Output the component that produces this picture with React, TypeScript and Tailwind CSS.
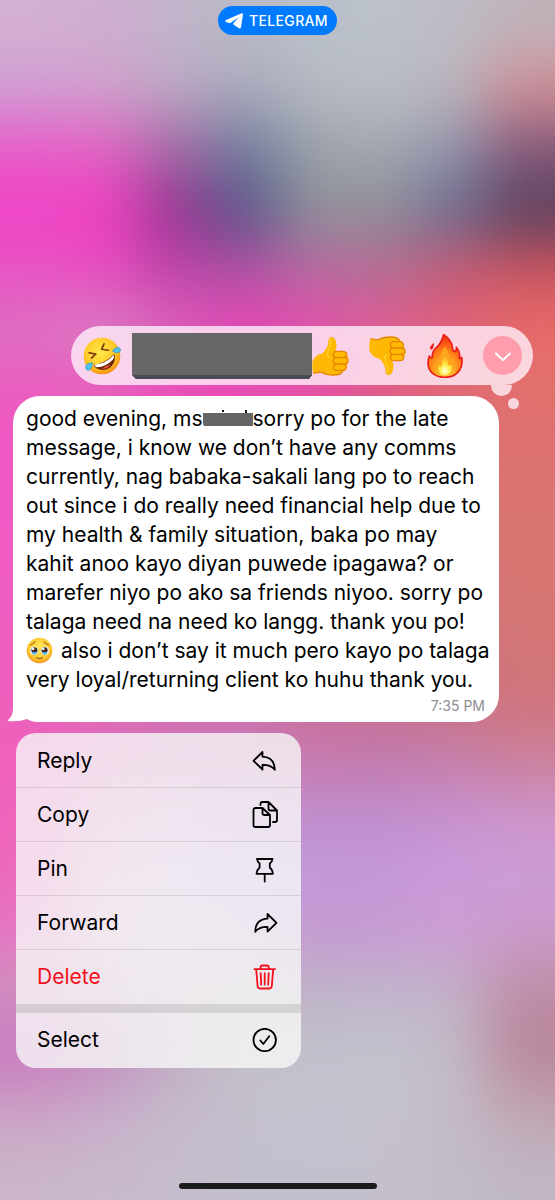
import React from 'react';

// Wallpaper colours, top to bottom, eight swatches per row
const WALLPAPER = [
  ['#d3b0d2', '#cfadd0', '#c2b4ca', '#b8b9c6', '#b9c0c8', '#bcc1ca', '#bdbcc5', '#c0b2ba'],
  ['#d09cd4', '#d09fcc', '#bca8c4', '#a9a9bb', '#b4b9c2', '#b9bdc6', '#b9b4bd', '#d08c94'],
  ['#e85cc8', '#e262c2', '#a268a4', '#6f7a9c', '#9ba1a9', '#a4a8af', '#9294ac', '#84587a'],
  ['#f042c6', '#f03ec2', '#983490', '#545488', '#8c9098', '#8f8f98', '#6c6e92', '#58405c'],
  ['#e854c4', '#e84cc0', '#c044a8', '#b050a4', '#b868a0', '#b46c94', '#c45c78', '#cc5460'],
  ['#dc70c0', '#d880c2', '#dc60bc', '#e846b8', '#e450ac', '#e25c96', '#e45f7c', '#e86c6a'],
  ['#ec5cc0', '#e85cbc', '#ec4cb8', '#e84cb4', '#e450a8', '#e05c88', '#e06c74', '#e2706c'],
  ['#f058c4', '#ec58c0', '#e854b8', '#e454b0', '#e058a0', '#dc6484', '#dc7074', '#dc7272'],
  ['#f05ac4', '#ec5cc0', '#e45cb8', '#e05cac', '#dc609c', '#d86c84', '#d87474', '#da7670'],
  ['#f05cc4', '#ea60c0', '#e064b8', '#d868a8', '#d46c98', '#d07088', '#d47478', '#d87672'],
  ['#ee60c0', '#e864bc', '#dc68b4', '#d46ca8', '#cc7098', '#cc7088', '#d0747c', '#d47676'],
  ['#ec60bc', '#e468b8', '#d86cb4', '#d06cac', '#cc6c98', '#c86c8c', '#cc7080', '#d07479'],
  ['#ee60bc', '#dc6cb8', '#cc74b4', '#c878b4', '#c878a8', '#c278a8', '#c47ca4', '#cc7c94'],
  ['#ee64bc', '#dc90c4', '#cc98cc', '#c090cc', '#c08ccc', '#c08ccc', '#c68fcd', '#cc94c8'],
  ['#ec68bc', '#dca0d0', '#cca8dc', '#c4a0dc', '#c298d8', '#c398d8', '#cc9bdc', '#ce9cd8'],
  ['#e674c2', '#dcaacc', '#ccb0d8', '#c8a8d4', '#c498d2', '#c69ad2', '#cc9cd4', '#cc9acc'],
  ['#cf92bf', '#d0a4c4', '#c8b4c8', '#c2b8c4', '#bfb2c6', '#c0b4cb', '#c2b2c8', '#be8ea6'],
  ['#c878c0', '#c088bc', '#c0acc4', '#c2bfc8', '#c2c1cc', '#c3c2cd', '#c2bcc8', '#b8849a'],
  ['#cca0c4', '#c8accb', '#c5b9ca', '#c5bfcc', '#c6c2cf', '#c6c2ce', '#c4bcc8', '#c0a4b0'],
  ['#cab6ca', '#c8b9cb', '#c5bccc', '#c4bfce', '#c3bfce', '#c4bfcb', '#c2bbc8', '#c0b6c4'],
];

const Wallpaper: React.FC = () => (
  <svg
    className="absolute inset-0 h-full w-full"
    viewBox="0 0 560 1200"
    preserveAspectRatio="none"
    aria-hidden="true"
  >
    <defs>
      <filter id="soften" filterUnits="userSpaceOnUse" x="-160" y="-160" width="880" height="1520" colorInterpolationFilters="sRGB">
        <feGaussianBlur stdDeviation="30" />
      </filter>
    </defs>
    <g filter="url(#soften)" shapeRendering="crispEdges">
      {WALLPAPER.map((row, r) =>
        row.map((color, c) => {
          const left = c === 0 ? -150 : c * 70;
          const right = c === 7 ? 710 : (c + 1) * 70;
          const top = r === 0 ? -150 : r * 60;
          const bottom = r === 19 ? 1350 : (r + 1) * 60;
          return <rect key={`${r}-${c}`} x={left} y={top} width={right - left} height={bottom - top} fill={color} />;
        })
      )}
    </g>
  </svg>
);

const Rofl: React.FC = () => (
  <svg className="h-[38px] w-[38px]" viewBox="0 0 112 112" aria-hidden="true">
    <defs>
      <radialGradient id="rofl" cx="0.45" cy="0.4" r="0.6">
        <stop offset="0" stopColor="#ffe84a" />
        <stop offset="0.7" stopColor="#ffc928" />
        <stop offset="1" stopColor="#f78f12" />
      </radialGradient>
    </defs>
    <circle cx="56" cy="56" r="54" fill="url(#rofl)" />
    <g fill="none" stroke="#7c3d0c" strokeWidth="5" strokeLinecap="round" strokeLinejoin="round">
      <path d="M18 47 38 50 25 62" />
      <path d="M62 20 55 36 75 39" />
    </g>
    <path d="M31 82Q66 78 92 50Q99 70 84 86Q64 105 39 92Q32 88 31 82Z" fill="#6d260d" />
    <path d="M33 82Q67 79 91 53Q93 62 87 68Q65 90 40 89Q35 88 33 82Z" fill="#fff" />
    <path d="M56 94Q66 84 82 82Q72 95 56 94Z" fill="#f0503c" />
    <path d="M28 76Q8 76 8 90Q8 99 16 98Q26 96 28 76Z" fill="#52c5ee" stroke="#268fc6" strokeWidth="2" />
    <path d="M87 42Q94 28 107 32Q113 36 109 43Q101 50 87 42Z" fill="#52c5ee" stroke="#268fc6" strokeWidth="2" />
  </svg>
);

const Thumb: React.FC<{ className?: string }> = ({ className }) => (
  <svg className={className} viewBox="0 0 114 120" aria-hidden="true">
    <path
      d="M2 74Q12 54 30 53Q46 38 49 22Q48 5 57 3Q68 2 72 18Q76 30 70 46H92Q104 46 104 56Q111 61 108 73Q110 82 104 90Q104 101 95 105Q90 117 64 117Q42 117 30 109Q16 108 4 112Q-1 96 2 74Z"
      fill="#ffb804"
    />
    <path
      d="M70 46H92Q104 46 104 56Q104 64 94 65H72Q64 65 64 57Q64 50 70 46M94 65Q109 65 108 75Q107 84 97 84H71Q61 82 64 72Q66 66 72 65M97 84Q107 90 101 99Q98 103 92 103H72Q62 101 65 91Q67 85 71 84M92 103Q90 117 64 117Q42 117 30 109Q16 108 4 112"
      fill="none"
      stroke="#e58600"
      strokeWidth="4"
      strokeLinejoin="round"
    />
    <path d="M55 10Q59 26 49 45Q43 58 52 64" fill="none" stroke="#ffd22e" strokeWidth="4" strokeLinecap="round" />
  </svg>
);

const Fire: React.FC = () => (
  <svg className="h-11 w-[38px]" viewBox="0 0 108 132" aria-hidden="true">
    <defs>
      <radialGradient id="fire" cx="0.5" cy="0.85" r="0.85">
        <stop offset="0" stopColor="#fff06a" />
        <stop offset="0.4" stopColor="#ff9a1c" />
        <stop offset="0.75" stopColor="#ff5a14" />
        <stop offset="1" stopColor="#ee2c18" />
      </radialGradient>
      <radialGradient id="core" cx="0.5" cy="0.75" r="0.6">
        <stop offset="0" stopColor="#fffce0" />
        <stop offset="0.5" stopColor="#fff04e" />
        <stop offset="1" stopColor="#ffc42a" />
      </radialGradient>
    </defs>
    <path
      d="M50 2Q74 18 76 41Q77 52 84 53Q89 50 88 40Q102 58 96 72Q101 74 104 70Q108 92 98 108Q84 130 53 130Q21 130 7 106Q-1 88 7 66Q10 72 16 72Q14 54 28 41Q43 28 50 2Z"
      fill="url(#fire)"
      stroke="#e91b14"
      strokeWidth="5"
      strokeLinejoin="round"
    />
    <path d="M20 26Q22 34 17 44Q12 50 9 43Q8 37 20 26Z" fill="#e91b14" />
    <path d="M53 38Q69 54 65 74Q68 80 74 75Q89 96 76 115Q66 126 52 126Q35 126 27 112Q20 95 32 81Q36 86 41 83Q38 56 53 38Z" fill="#ffa51d" />
    <path d="M54 68Q65 80 62 93Q70 96 73 91Q80 108 69 118Q60 126 49 124Q32 120 32 105Q32 98 36 94Q39 98 44 96Q43 79 54 68Z" fill="url(#core)" />
  </svg>
);

const TearyFace: React.FC = () => (
  <svg className="mr-2 inline-block h-[27px] w-[27px] align-[-6px]" viewBox="0 0 80 80" role="img" aria-label="Face holding back tears">
    <defs>
      <radialGradient id="teary" cx="0.5" cy="0.4" r="0.6">
        <stop offset="0" stopColor="#ffe95a" />
        <stop offset="0.7" stopColor="#ffcb34" />
        <stop offset="1" stopColor="#f3921b" />
      </radialGradient>
    </defs>
    <circle cx="40" cy="40" r="38" fill="url(#teary)" />
    <path d="M13 24Q22 20 27 14M67 24Q58 20 53 14" fill="none" stroke="#9a5a12" strokeWidth="3" strokeLinecap="round" />
    <circle cx="24" cy="41" r="12" fill="#e9f6ff" />
    <circle cx="56" cy="41" r="12" fill="#e9f6ff" />
    <circle cx="25" cy="39" r="9" fill="#3c2a24" />
    <circle cx="55" cy="39" r="9" fill="#3c2a24" />
    <path d="M17 47Q25 42 33 47Q31 53 24 53Q18 52 17 47ZM47 47Q55 42 63 47Q62 53 56 53Q49 52 47 47Z" fill="#5db9ea" />
    <circle cx="21" cy="35" r="4" fill="#fff" />
    <circle cx="51" cy="35" r="4" fill="#fff" />
    <path d="M31 61Q40 66 49 61" fill="none" stroke="#8a4711" strokeWidth="3" strokeLinecap="round" />
  </svg>
);

const ICONS = {
  reply: 'M11.5 5 2.5 13.8 11.5 22.5V17.8C17 17.6 20.5 18.6 23.8 22.7 23.6 14.5 19 10 11.5 9.6Z',
  copy: 'M4.5 7H11.5L19 14V24Q19 26 17 26H4.5Q2.5 26 2.5 24V9Q2.5 7 4.5 7ZM11.5 7V12Q11.5 14 13.5 14H19M9.5 4V3Q9.5 1 11.5 1H17.5L26 9.5V19Q26 21 24 21H22M17.5 1V7.5Q17.5 9.5 19.5 9.5H26',
  pin: 'M6 4H21.5C21.2 6.5 20.2 7.5 18.8 8.5V12.5C20.5 14 21.8 16 21.8 18.8H5.5C5.5 16 7 14 8.6 12.5V8.5C7.3 7.5 6.3 6.5 6 4ZM13.7 18.8V26.5',
  forward: 'M16.5 5 25.5 13.8 16.5 22.5V17.8C11 17.6 7.5 18.6 4.2 22.7 4.4 14.5 9 10 16.5 9.6Z',
  trash: 'M3.5 6.2H24M9.5 6V4.5Q9.5 2.5 11.5 2.5H15.5Q17.8 2.5 17.8 4.5V6M5.2 6.5 6.6 23Q6.8 25.5 9 25.5H18.4Q20.6 25.5 20.8 23L22.2 6.5M9.7 10.2 10.2 21.6M13.7 10.2V21.6M17.7 10.2 17.2 21.6',
  select: 'M2.5 14a11.2 11.2 0 1 0 22.4 0a11.2 11.2 0 1 0-22.4 0M9.4 14.5 12.3 18 18.2 10.2',
};

const MenuItem: React.FC<{ label: string; icon: keyof typeof ICONS; className?: string }> = ({ label, icon, className = '' }) => (
  <li>
    <button type="button" className={`flex h-[54px] w-full items-center justify-between pl-[21px] pr-[22px] ${className}`}>
      {label}
      <svg
        className="h-7 w-7"
        viewBox="0 0 28 28"
        fill="none"
        stroke="currentColor"
        strokeWidth="1.8"
        strokeLinecap="round"
        strokeLinejoin="round"
        aria-hidden="true"
      >
        <path d={ICONS[icon]} />
      </svg>
    </button>
  </li>
);

const Redacted: React.FC = () => (
  <svg className="inline-block h-[18px] w-[50px] align-baseline" viewBox="0 0 50 18" role="img" aria-label="Name hidden">
    <path d="M19 2h2v2h-2zM42 2h2v3h-2z" fill="#111" />
    <path d="M0 5H50V18H1L0 16Z" fill="#656565" />
  </svg>
);

const App: React.FC = () => {
  return (
    <main className="relative isolate flex min-h-screen flex-col overflow-hidden bg-[#c5bccc] pt-[6px] font-['Inter',sans-serif] text-black">
      <div className="absolute inset-0 -z-10">
        <Wallpaper />
      </div>

      <a
        href="#telegram"
        className="flex h-[29px] items-center gap-[6px] self-center rounded-full bg-[#007aff] pl-[7px] pr-[9px] text-[14px] font-medium tracking-wide text-white"
      >
        <svg className="h-4 w-[18px]" viewBox="0 0 54 48" fill="currentColor" aria-hidden="true">
          <path d="M50 1 3 21Q-1 24 3 27L15 31 41 13 25 31Q24 33 26 35L42 46Q47 48 48 43L54 4Q54 0 50 1Z" />
        </svg>
        TELEGRAM
      </a>

      <div className="relative mr-[22px] mt-[291px] flex h-[59px] items-center self-end rounded-full bg-[#fff0fa]/80 pl-3 pr-[11px]">
        <button type="button" aria-label="Laugh">
          <Rofl />
        </button>
        <svg className="ml-[11px] h-[47px] w-[180px]" viewBox="0 0 180 47" aria-hidden="true">
          <path d="M0 1H180V43L177 47H4L0 43Z" fill="#676767" />
          <path d="M0 43H180L177 47H4Z" fill="#484a55" />
        </svg>
        <div className="flex items-center gap-[19px]">
          <button type="button" aria-label="Thumbs up">
            <Thumb className="h-10 w-[38px]" />
          </button>
          <button type="button" aria-label="Thumbs down">
            <Thumb className="h-10 w-[38px] -scale-y-100" />
          </button>
          <button type="button" aria-label="Fire">
            <Fire />
          </button>
          <button type="button" aria-label="More reactions" className="flex h-[39px] w-[39px] items-center justify-center rounded-full bg-[#ff9dac]">
            <svg className="h-5 w-5" viewBox="0 0 20 20" fill="none" stroke="#fff" strokeWidth="2" strokeLinecap="round" strokeLinejoin="round" aria-hidden="true">
              <path d="M3 7.5 10 14 17 7.5" />
            </svg>
          </button>
        </div>
        <span className="absolute right-[21px] top-full h-[11px] w-[21px] rounded-b-full bg-[#fff0fa]/80" />
        <span className="absolute -bottom-6 right-[14px] h-[11px] w-[11px] rounded-full bg-[#fff0fa]/80" />
      </div>

      <article className="relative ml-[13px] mr-4 mt-[11px] max-w-[486px] rounded-[27px] bg-white pb-[6px] pl-[13px] pr-[14px] pt-[8px]">
        <p className="whitespace-nowrap text-[21px] leading-[29px]">
          good evening, ms<Redacted />sorry po for the late
          <br />
          message, i know we don’t have any comms
          <br />
          currently, nag babaka-sakali lang po to reach
          <br />
          out since i do really need financial help due to
          <br />
          my health &amp; family situation, baka po may
          <br />
          kahit anoo kayo diyan puwede ipagawa? or
          <br />
          marefer niyo po ako sa friends niyoo. sorry po
          <br />
          talaga need na need ko langg. thank you po!
          <br />
          <TearyFace />also i don’t say it much pero kayo po talaga
          <br />
          very loyal/returning client ko huhu thank you.
        </p>
        <time className="block pt-[2px] text-right text-[14px] leading-5 text-[#8e8e93]">7:35 PM</time>
        <svg className="absolute -left-[6px] bottom-0 h-7 w-8" viewBox="0 0 32 28" aria-hidden="true">
          <path d="M6 0H32V28Q24 28 20 25Q12 28 1 27Q0 27 1 26Q6 22 6 14Z" fill="#fff" />
        </svg>
      </article>

      <ul className="ml-4 mt-[11px] w-[285px] overflow-hidden rounded-[20px] bg-[#f8f7f8]/80 py-px text-[21px]">
        <MenuItem label="Reply" icon="reply" className="border-b border-black/10" />
        <MenuItem label="Copy" icon="copy" className="border-b border-black/10" />
        <MenuItem label="Pin" icon="pin" className="border-b border-black/10" />
        <MenuItem label="Forward" icon="forward" className="border-b border-black/10" />
        <MenuItem label="Delete" icon="trash" className="text-[#f5101c]" />
        <li role="separator" className="h-[9px] bg-black/10" />
        <MenuItem label="Select" icon="select" />
      </ul>

      <div className="mb-[11px] mt-auto h-[6px] w-[198px] self-center rounded-full bg-[#1c1c1e]" />
    </main>
  );
};

export default App;
